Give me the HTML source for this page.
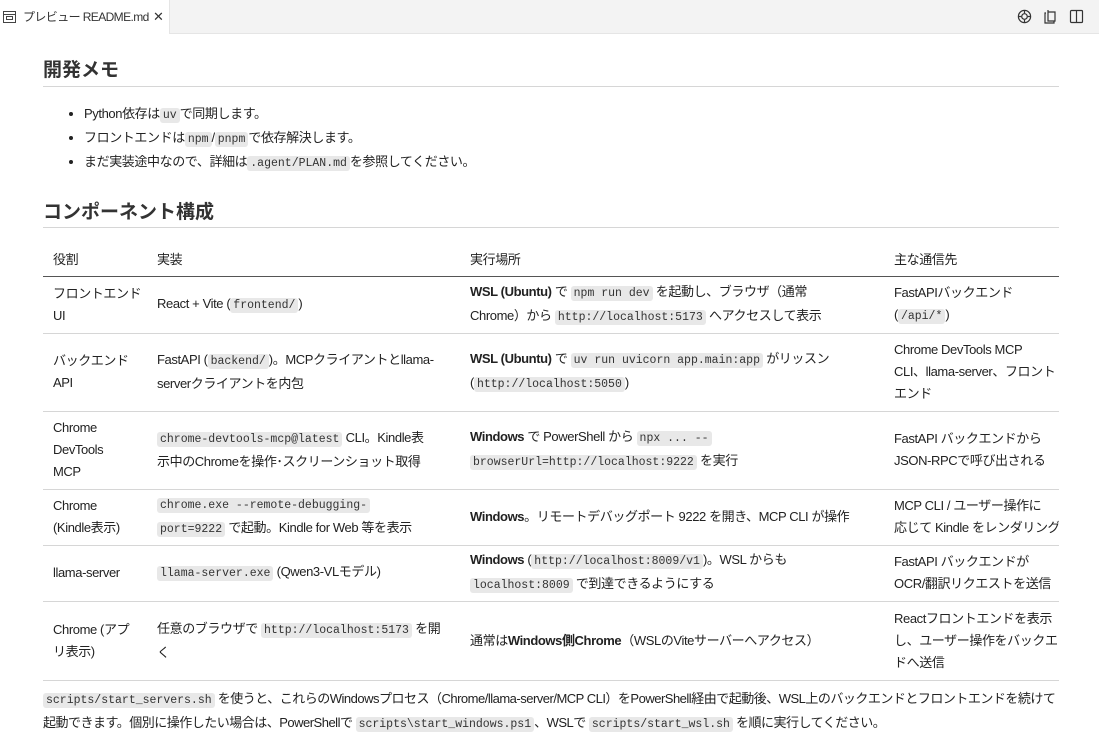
<!DOCTYPE html>
<html><head><meta charset="utf-8"><style>
*{box-sizing:border-box;margin:0;padding:0}
body{width:1099px;height:753px;overflow:hidden;background:#fff;font-family:"Liberation Sans","Noto Sans CJK JP",sans-serif;font-size:13px;color:#222;position:relative;letter-spacing:-0.4px}
.tabbar{position:absolute;left:0;top:0;width:1099px;height:34px;background:#f3f3f3;border-bottom:1px solid #e5e5e5}
.tab{position:absolute;left:0;top:0;width:170px;height:34px;background:#fff;border-right:1px solid #e5e5e5;font-size:12px;line-height:34px;padding-left:23px;color:#333;white-space:nowrap;letter-spacing:-0.6px}
code{font-family:"Liberation Mono","Noto Sans CJK JP",monospace;font-size:11.5px;background:#e8e8e8;border-radius:3px;padding:1px 3px;letter-spacing:0;color:#333}
h1{position:absolute;left:43px;top:55px;width:1016px;font-size:19px;font-weight:bold;height:32px;border-bottom:1px solid #d6d6d6;color:#333;letter-spacing:0}
h2{position:absolute;left:43px;top:197px;width:1016px;font-size:19px;font-weight:bold;height:31px;border-bottom:1px solid #d6d6d6;color:#333;letter-spacing:0}
ul{position:absolute;left:66px;top:103px;line-height:22px;list-style:disc;padding-left:18px;white-space:nowrap}
table{position:absolute;left:43px;top:244px;width:1016px;border-collapse:collapse;line-height:22px;table-layout:fixed}
td,th{padding:0 10px;vertical-align:middle;text-align:left;white-space:nowrap;overflow:hidden}
th{font-weight:normal;height:32px;border-bottom:1.5px solid #555}
td{border-bottom:1px solid #d6d6d6}
p{position:absolute;left:43px;top:688px;width:1030px;line-height:22px;white-space:nowrap;letter-spacing:-0.5px}
</style></head><body>
<div class="tabbar"><div class="tab"><svg style="position:absolute;left:3px;top:11px" width="13" height="12" viewBox="0 0 13 12" fill="none" stroke="#444"><rect x="0.5" y="0.5" width="12" height="11"/><line x1="0.5" y1="3.5" x2="12.5" y2="3.5"/><rect x="3.5" y="5.5" width="6" height="3"/></svg>プレビュー README.md<span style="position:absolute;left:153px;top:0;font-size:13px">✕</span></div>
<svg style="position:absolute;left:1017px;top:9px" width="15" height="15" viewBox="0 0 16 16" fill="none" stroke="#333" stroke-width="1.3"><circle cx="8" cy="8" r="6.5"/><circle cx="8" cy="8" r="3"/><path d="M8 1.5v3M8 11.5v3M1.5 8h3M11.5 8h3"/></svg>
<svg style="position:absolute;left:1043px;top:9px" width="14" height="15" viewBox="0 0 14 15" fill="none" stroke="#333" stroke-width="1.2"><path d="M3 4h-1v10h9v-2M5 1v2M5 3h7v9H5z"/></svg>
<svg style="position:absolute;left:1069px;top:9px" width="15" height="15" viewBox="0 0 15 15" fill="none" stroke="#333" stroke-width="1.2"><rect x="1.5" y="1.5" width="12" height="12" rx="1"/><line x1="7.5" y1="1.5" x2="7.5" y2="13.5"/></svg>
</div>
<h1>開発メモ</h1>
<ul>
<li>Python依存は<code>uv</code>で同期します。</li>
<li>フロントエンドは<code>npm</code>/<code>pnpm</code>で依存解決します。</li>
<li>まだ実装途中なので、詳細は<code>.agent/PLAN.md</code>を参照してください。</li>
</ul>
<h2>コンポーネント構成</h2>
<table>
<colgroup><col style="width:104px"><col style="width:313px"><col style="width:424px"><col style="width:175px"></colgroup>
<tr><th>役割</th><th>実装</th><th>実行場所</th><th>主な通信先</th></tr>
<tr style="height:57px"><td>フロントエンド<br>UI</td><td>React + Vite (<code>frontend/</code>)</td><td><b>WSL (Ubuntu)</b> で <code>npm run dev</code> を起動し、ブラウザ（通常<br>Chrome）から <code>http://localhost:5173</code> へアクセスして表示</td><td>FastAPIバックエンド<br>(<code>/api/*</code>)</td></tr>
<tr style="height:78px"><td>バックエンド<br>API</td><td>FastAPI (<code>backend/</code>)。MCPクライアントとllama-<br>serverクライアントを内包</td><td><b>WSL (Ubuntu)</b> で <code>uv run uvicorn app.main:app</code> がリッスン<br>(<code>http://localhost:5050</code>)</td><td>Chrome DevTools MCP<br>CLI、llama-server、フロント<br>エンド</td></tr>
<tr style="height:78px"><td>Chrome<br>DevTools<br>MCP</td><td><code>chrome-devtools-mcp@latest</code> CLI。Kindle表<br>示中のChromeを操作･スクリーンショット取得</td><td><b>Windows</b> で PowerShell から <code>npx ... --</code><br><code>browserUrl=http://localhost:9222</code> を実行</td><td>FastAPI バックエンドから<br>JSON-RPCで呼び出される</td></tr>
<tr style="height:56px"><td>Chrome<br>(Kindle表示)</td><td><code>chrome.exe --remote-debugging-</code><br><code>port=9222</code> で起動。Kindle for Web 等を表示</td><td><b>Windows</b>。リモートデバッグポート 9222 を開き、MCP CLI が操作</td><td>MCP CLI / ユーザー操作に<br>応じて Kindle をレンダリング</td></tr>
<tr style="height:56px"><td>llama-server</td><td><code>llama-server.exe</code> (Qwen3-VLモデル)</td><td><b>Windows</b> (<code>http://localhost:8009/v1</code>)。WSL からも<br><code>localhost:8009</code> で到達できるようにする</td><td>FastAPI バックエンドが<br>OCR/翻訳リクエストを送信</td></tr>
<tr style="height:79px"><td>Chrome (アプ<br>リ表示)</td><td>任意のブラウザで <code>http://localhost:5173</code> を開<br>く</td><td>通常は<b>Windows側Chrome</b>（WSLのViteサーバーへアクセス）</td><td>Reactフロントエンドを表示<br>し、ユーザー操作をバックエン<br>ドへ送信</td></tr>
</table>
<p><code>scripts/start_servers.sh</code> を使うと、これらのWindowsプロセス（Chrome/llama-server/MCP CLI）をPowerShell経由で起動後、WSL上のバックエンドとフロントエンドを続けて<br>起動できます。個別に操作したい場合は、PowerShellで <code>scripts\start_windows.ps1</code>、WSLで <code>scripts/start_wsl.sh</code> を順に実行してください。</p>
</body></html>
